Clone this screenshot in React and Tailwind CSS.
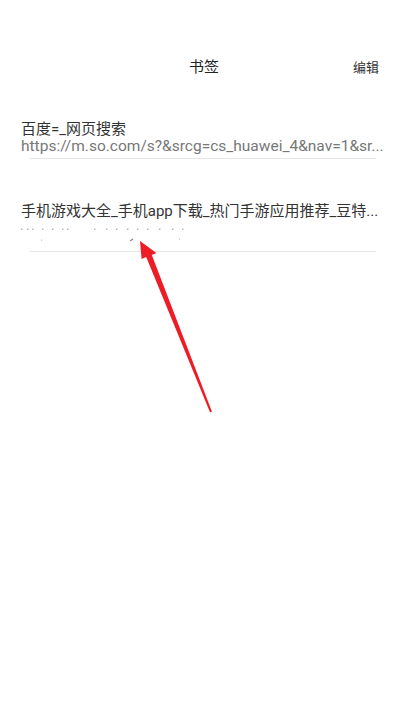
import React from 'react'

const font = { fontFamily: 'Roboto, "Noto Sans CJK SC", sans-serif' }

// specks left of the erased url in the second row
const specks = [0, 6, 11, 21, 31, 41, 46, 73, 85, 95, 106, 116, 126, 138, 151, 161]

const Arrow = () => (
  <svg className="absolute inset-0 pointer-events-none" width="403" height="720" viewBox="0 0 403 720">
    <polygon
      points="140,241 156.4,252.9 151.8,254.9 211.9,411.6 210.1,412.4 146.2,257.1 141.6,259.1"
      fill="#ee1c25"
    />
  </svg>
)

export default function App() {
  return (
    <div className="relative w-[403px] h-[720px] bg-white overflow-hidden" style={font}>
      <div className="grid grid-cols-[1fr_auto_1fr] items-center h-[22px] mt-[56px]">
        <div />
        <div className="text-[15px] text-[#222] pl-[5px]">书签</div>
        <div className="justify-self-end pr-[24px] text-[13px] text-[#333]">编辑</div>
      </div>

      <div className="mt-[42px]">
        <div className="px-[21px]">
          <div className="text-[15px] leading-[18px] text-[#333] whitespace-nowrap">百度=_网页搜索</div>
          <div className="text-[15.5px] leading-[17px] text-[#777] whitespace-nowrap">
            https://m.so.com/s?&amp;srcg=cs_huawei_4&amp;nav=1&amp;sr...
          </div>
        </div>
        <div className="mt-[3px] ml-[30px] mr-[27px] h-px bg-[#e6e6e6]" />

        <div className="px-[21px] mt-[43px]">
          <div className="text-[15px] leading-[18px] text-[#333] whitespace-nowrap">
            手机游戏大全_手机app下载_热门手游应用推荐_豆特...
          </div>
          <svg className="block mt-[8px]" width="170" height="14" viewBox="0 0 170 14">
            {specks.map((x) => (
              <rect key={x} x={x} y="0.5" width="1.5" height="1.5" fill="#b5b5b5" />
            ))}
            <rect x="20" y="11.5" width="1.2" height="1.2" fill="#c0c0c0" />
            <path d="M109 13 L112 11" stroke="#8a8a8a" strokeWidth="1.2" />
            <rect x="158" y="10.5" width="1.2" height="1.2" fill="#c0c0c0" />
          </svg>
        </div>
        <div className="mt-[9px] ml-[30px] mr-[27px] h-px bg-[#e6e6e6]" />
      </div>

      <Arrow />
    </div>
  )
}
